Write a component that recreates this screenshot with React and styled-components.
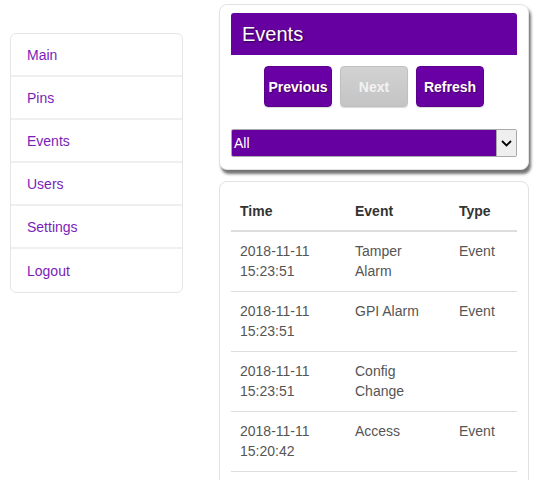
import React from 'react';
import styled, {createGlobalStyle} from 'styled-components';

const GlobalStyle = createGlobalStyle`
	body {
		margin: 0;
		background: #fff;
		font-family: "Liberation Sans", Arial, sans-serif;
	}
`;

const purple = '#6600a0';

const Page = styled.div`
	display: flex;
	align-items: flex-start;
	gap: 36px;
	padding: 4px 0 0 10px;
	width: 542px;
	height: 480px;
	box-sizing: border-box;
	overflow: hidden;
`;

const Nav = styled.ul`
	list-style: none;
	margin: 29px 0 0 0;
	padding: 0;
	width: 173px;
	box-sizing: border-box;
	border: 1px solid #e6e6e6;
	border-radius: 6px;
`;

const NavItem = styled.li`
	height: 43px;
	display: flex;
	align-items: center;
	padding-left: 16px;
	font-size: 14px;
	color: #7a1db8;
	border-bottom: ${props => props.last ? 'none' : '2px solid #efefef'};
	box-sizing: border-box;
`;

const Column = styled.div`
	width: 310px;
	display: flex;
	flex-direction: column;
	gap: 11px;
`;

const Panel = styled.div`
	border: 1px solid #e2e2e2;
	border-radius: 8px;
	background: #fff;
	padding: ${props => props.pad || '8px 11px 12px'};
	box-shadow: ${props => props.raised ? '2px 4px 3px rgba(0,0,0,0.55)' : 'none'};
`;

const Title = styled.h1`
	margin: 0;
	height: 42px;
	background: ${purple};
	border-radius: 3px 3px 0 0;
	color: #fff;
	font-size: 20px;
	font-weight: normal;
	display: flex;
	align-items: center;
	padding-left: 11px;
	text-shadow: 1px 1px 2px rgba(0,0,0,0.6);
`;

const Toolbar = styled.div`
	display: flex;
	justify-content: center;
	gap: 8px;
	margin-top: 11px;
`;

const Button = styled.button`
	width: 68px;
	height: 41px;
	border: 1px solid ${props => props.disabled ? '#c0c0c0' : '#5a008c'};
	border-radius: 4px;
	background: ${props => props.disabled
		? 'linear-gradient(#d2d2d2, #c4c4c4)'
		: `linear-gradient(#6a00a6, ${purple})`};
	color: ${props => props.disabled ? '#f2f2f2' : '#fff'};
	font-family: "Liberation Sans", Arial, sans-serif;
	font-size: 14px;
	font-weight: bold;
	padding: 0;
	text-shadow: ${props => props.disabled ? 'none' : '1px 1px 1px rgba(0,0,0,0.4)'};
	box-shadow: 0 1px 1px rgba(0,0,0,0.15);
`;

const SelectBox = styled.div`
	margin-top: 22px;
	height: 28px;
	display: flex;
	border: 1px solid #a9a9a9;
	box-sizing: border-box;
	border-radius: 2px;
	overflow: hidden;
`;

const SelectValue = styled.div`
	flex: 1;
	background: ${purple};
	color: #fff;
	font-size: 14px;
	display: flex;
	align-items: center;
	padding-left: 2px;
`;

const SelectArrow = styled.div`
	width: 19px;
	background: #efefef;
	border-left: 1px solid #a9a9a9;
	display: flex;
	align-items: center;
	justify-content: center;
`;

const Table = styled.table`
	width: 100%;
	border-collapse: collapse;
	font-size: 14px;
	color: #555;
`;

const Th = styled.th`
	text-align: left;
	font-weight: bold;
	color: #333;
	padding: 9px;
	line-height: 20px;
	border-bottom: 2px solid #ddd;
	width: ${props => props.w};
`;

const Td = styled.td`
	vertical-align: top;
	padding: 9px 9px 10px;
	line-height: 20px;
	border-bottom: 1px solid #ddd;
`;

const events = [
	{time: ['2018-11-11', '15:23:51'], event: ['Tamper', 'Alarm'], type: 'Event'},
	{time: ['2018-11-11', '15:23:51'], event: ['GPI Alarm'], type: 'Event'},
	{time: ['2018-11-11', '15:23:51'], event: ['Config', 'Change'], type: ''},
	{time: ['2018-11-11', '15:20:42'], event: ['Access'], type: 'Event'},
];

const Lines = ({parts}) => parts.map((p, i) => <div key={i}>{p}</div>);

function App() {
	const menu = ['Main', 'Pins', 'Events', 'Users', 'Settings', 'Logout'];
	return (
		<Page>
			<GlobalStyle/>
			<Nav>
				{menu.map((item, i) => (
					<NavItem key={item} last={i === menu.length - 1}>{item}</NavItem>
				))}
			</Nav>
			<Column>
				<Panel raised>
					<Title>Events</Title>
					<Toolbar>
						<Button>Previous</Button>
						<Button disabled>Next</Button>
						<Button>Refresh</Button>
					</Toolbar>
					<SelectBox>
						<SelectValue>All</SelectValue>
						<SelectArrow>
							<svg width="11" height="7" viewBox="0 0 11 7">
								<path d="M1 1 L5.5 5.5 L10 1" fill="none" stroke="#000" strokeWidth="1.8"/>
							</svg>
						</SelectArrow>
					</SelectBox>
				</Panel>
				<Panel pad="10px 11px 40px">
					<Table>
						<thead>
							<tr>
								<Th w="97px">Time</Th>
								<Th w="86px">Event</Th>
								<Th>Type</Th>
							</tr>
						</thead>
						<tbody>
							{events.map((e, i) => (
								<tr key={i}>
									<Td><Lines parts={e.time}/></Td>
									<Td><Lines parts={e.event}/></Td>
									<Td>{e.type}</Td>
								</tr>
							))}
						</tbody>
					</Table>
				</Panel>
			</Column>
		</Page>
	);
}

export default App;
